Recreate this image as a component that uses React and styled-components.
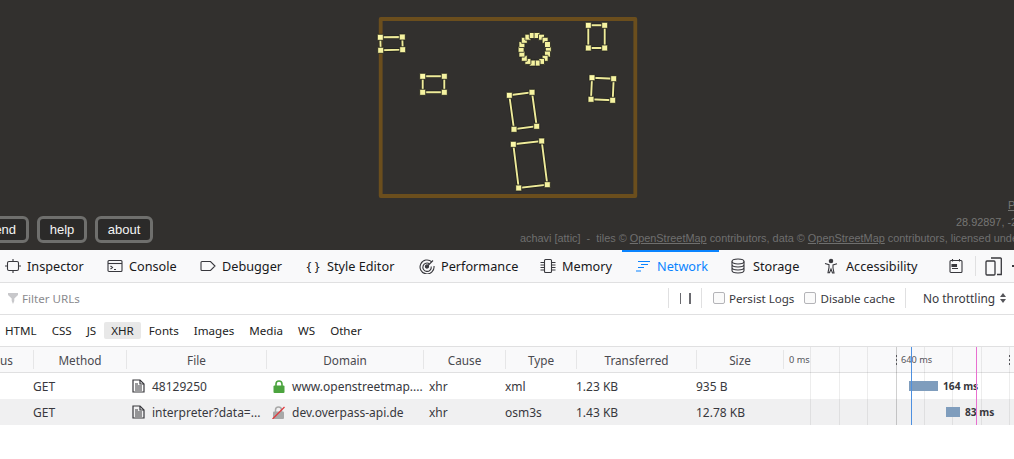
import React from 'react';
import styled, { createGlobalStyle } from 'styled-components';

const Global = createGlobalStyle`
  html, body { margin: 0; padding: 0; background: #fff; overflow: hidden; }
  body { font-family: "Noto Sans", "Open Sans", sans-serif; font-size: 12px; color: #38383d; }
`;

const Page = styled.div`
  width: 1014px;
  height: 459px;
  overflow: hidden;
  display: flex;
  flex-direction: column;
`;

/* map */
const Map = styled.div`
  position: relative;
  height: 250px;
  flex: none;
  background: #32302e;
  overflow: hidden;
  font-family: "Liberation Sans", Arial, sans-serif;
`;
const MapDrawing = styled.svg`
  position: absolute;
  left: 0;
  top: 0;
`;
const MapButtons = styled.div`
  position: absolute;
  left: -25px;
  top: 216px;
  display: flex;
  gap: 8px;
`;
const MapButton = styled.button`
  height: 27px;
  width: ${p => p.$w}px;
  padding: 0;
  box-sizing: border-box;
  border: 3px solid #6f6f6d;
  border-radius: 6px;
  background: #2b2a29;
  color: #f4f4f4;
  font: 13px "Liberation Sans", Arial, sans-serif;
`;
const MapInfo = styled.div`
  position: absolute;
  white-space: nowrap;
  font-size: 10.9px;
  line-height: 14px;
  color: ${p => p.$dim ? '#6f6f6e' : '#767674'};
  left: ${p => p.$x}px;
  top: ${p => p.$y}px;
  a { color: inherit; text-decoration: underline; }
`;

/* tabs */
const Tabs = styled.div`
  height: 32px;
  flex: none;
  background: #f9f9fa;
  border-bottom: 1px solid #e0e0e1;
  display: flex;
  align-items: stretch;
  position: relative;
`;
const TabList = styled.div`
  display: flex;
  flex: none;
  margin-left: -8px;
  width: 946px;
`;
const Tab = styled.div`
  display: flex;
  flex: none;
  width: ${p => p.$w}px;
  box-sizing: border-box;
  align-items: center;
  gap: 6px;
  padding: 0 0 1px ${p => p.$pl || 13}px;
  white-space: nowrap;
  font-size: 12.7px;
  color: ${p => p.$active ? '#0a84ff' : '#18181a'};
  box-shadow: ${p => p.$active ? 'inset 0 2px 0 #0a84ff' : 'none'};
  svg { flex: none; }
`;
const Braces = styled.span`
  width: 16px;
  flex: none;
  text-align: center;
`;
const TabActions = styled.div`
  display: flex;
  align-items: center;
  flex: none;
  padding-left: 11px;
`;
const VLine = styled.span`
  width: 1px;
  height: ${p => p.$h || 20}px;
  background: #e0e0e1;
  flex: none;
  margin: 0 ${p => p.$mr || 0}px 0 ${p => p.$ml || 0}px;
`;
const More = styled.span`
  position: absolute;
  left: 1012px;
  top: 15px;
  width: 3px;
  height: 2px;
  background: #38383d;
`;

/* filter bar */
const FilterBar = styled.div`
  height: 30px;
  padding: 0 0 1px 8px;
  flex: none;
  border-bottom: 1px solid #e0e0e1;
  display: flex;
  align-items: center;
  background: #fff;
  font-size: 11.6px;
`;
const Search = styled.div`
  display: flex;
  flex: none;
  align-items: center;
  gap: 4px;
  width: 660px;
  color: #8a8a8e;
`;
const Pause = styled.div`
  width: 32px;
  flex: none;
  display: flex;
  justify-content: center;
  gap: 8px;
  span { width: 1.5px; height: 11px; background: #6a6a6f; }
`;
const Check = styled.label`
  display: flex;
  flex: none;
  align-items: center;
  gap: 4px;
  white-space: nowrap;
  margin-left: ${p => p.$ml}px;
  i { width: 10px; height: 10px; border: 1px solid #b4b4b8; border-radius: 2px; background: #fafafa; }
`;
const Throttle = styled.div`
  margin-left: 17px;
  display: flex;
  flex: none;
  align-items: center;
  gap: 5px;
  white-space: nowrap;
  font-size: 11.9px;
`;

/* type filters */
const TypeBar = styled.div`
  height: 31px;
  flex: none;
  border-bottom: 1px solid #e0e0e1;
  display: flex;
  align-items: center;
  gap: 1px;
  margin-left: -2px;
  font-size: 11.6px;
`;
const TypeButton = styled.span`
  padding: 0 7px;
  height: 17px;
  line-height: 17px;
  border-radius: 2px;
  background: ${p => p.$on ? '#e8e8e8' : 'transparent'};
  color: #222;
`;

/* table */
const COLS = '33px 93px 140px 157px 82px 71px 120px 87px 231px';
const Table = styled.div`
  position: relative;
  flex: none;
`;
const Head = styled.div`
  display: grid;
  grid-template-columns: ${COLS};
  height: 25px;
  background: #f9f9fa;
  border-bottom: 1px solid #e0e0e1;
  align-items: center;
  font-size: 11.75px;
`;
const HeadCell = styled.div`
  text-align: ${p => p.$left ? 'left' : 'center'};
  color: #4a4a4f;
  white-space: nowrap;
  height: 19px;
  line-height: 21px;
  overflow: hidden;
  border-left: ${p => p.$left ? '0' : '1px solid #e6e6e7'};
`;
const Row = styled.div`
  display: grid;
  grid-template-columns: ${COLS};
  height: 26px;
  align-items: center;
  background: ${p => p.$alt ? '#f0f0f1' : '#fff'};
  color: #38383d;
  white-space: nowrap;
`;
const Cell = styled.div`
  display: flex;
  align-items: center;
  gap: ${p => p.$gap || 0}px;
  padding-left: ${p => p.$pl || 0}px;
  overflow: hidden;
  svg { flex: none; }
`;
const Grid = styled.div`
  position: absolute;
  left: 783px;
  right: 0;
  top: 0;
  bottom: 0;
  pointer-events: none;
  background-image: repeating-linear-gradient(to right, transparent 0 27.4px, rgba(0, 0, 0, .07) 27.4px 28.4px);
`;
const Marker = styled.div`
  position: absolute;
  top: 0;
  bottom: 0;
  left: ${p => p.$x}px;
  width: ${p => p.$w}px;
  background: ${p => p.$c};
`;
const TickMark = styled.div`
  position: absolute;
  left: ${p => p.$x}px;
  top: 8px;
  height: 10px;
  width: 1px;
  background-image: repeating-linear-gradient(to bottom, #55555a 0 2px, transparent 2px 4px);
`;
const Bar = styled.div`
  position: absolute;
  left: ${p => p.$x}px;
  top: ${p => p.$y}px;
  width: ${p => p.$w}px;
  height: 10px;
  background: #7f9dbd;
`;
const Took = styled.div`
  position: absolute;
  left: ${p => p.$x}px;
  top: ${p => p.$y}px;
  font-size: 10.2px;
  font-weight: 700;
  line-height: 14px;
  color: #38383d;
  white-space: nowrap;
`;
const Tick = styled.div`
  position: absolute;
  left: ${p => p.$x}px;
  top: 6px;
  font-size: 9.2px;
  line-height: 14px;
  color: #55555a;
  white-space: nowrap;
`;

/* drawings */
const shapes = [
  [[380.3, 37.3], [402.3, 37], [402.7, 49.7], [380.7, 50.3]],
  [[588.3, 25.3], [604.7, 25.3], [604.7, 48], [588.3, 48]],
  [[422.7, 76.3], [444.3, 76.3], [444.3, 92.3], [422.7, 92.3]],
  [[592, 77.7], [613.7, 78.7], [612.7, 100.3], [591, 99.3]],
  [[509.3, 95.3], [532, 92.3], [536.7, 126.3], [514, 129.3]],
  [[513.3, 144.3], [541.7, 141], [547.3, 184.7], [518.7, 188]],
];
const ring = Array.from({ length: 18 }, (_, i) => {
  const a = (i / 18) * Math.PI * 2;
  return [534.7 + 13.6 * Math.cos(a), 49.3 + 14 * Math.sin(a)];
});

const Node = ({ at, bright }) => (
  <rect x={at[0] - 3} y={at[1] - 3} width="6" height="6" rx="0.5"
    fill={bright ? '#fdfaa8' : '#f5f2a0'} stroke="#20201b" strokeWidth="0.8" />
);

const Shape = ({ pts }) => {
  const p = pts.map(q => q.join(',')).join(' ');
  return <g>
    <polygon points={p} fill="none" stroke="#23231e" strokeWidth="3.6" />
    <polygon points={p} fill="none" stroke="#efeb9a" strokeWidth="1.9" />
    {pts.map((q, i) => <Node key={i} at={q} bright={i === 0} />)}
  </g>;
};

const Ico = ({ children, c = '#38383d' }) => (
  <svg width="16" height="16" viewBox="0 0 16 16" fill="none" stroke={c} strokeWidth="1.1">{children}</svg>
);
const InspectorIcon = () => <Ico><rect x="2.5" y="3.5" width="11" height="9" rx="1.5" /><path d="M8 1v2.5M8 12.5V15M0 8h2.5M13.5 8H16" /></Ico>;
const ConsoleIcon = () => <Ico><rect x="1" y="2.5" width="14" height="11" rx="1" /><path d="M1 5.5h14" /><path d="M3.5 8l2 1.5-2 1.5M7 11.5h2" /></Ico>;
const DebuggerIcon = () => <Ico><path d="M1 4.5q0-1 1-1h8.500l4.500 4.500-4.500 4.500H2q-1 0-1-1z" /></Ico>;
const PerfIcon = () => <Ico><path d="M12.800 3.800A7 7 0 1 0 15 8" /><path d="M10.500 5.800A4.200 4.200 0 1 0 12.200 8.500" /><circle cx="8" cy="8.500" r="1.600" fill="#38383d" /><path d="M9 7.500l5-5" /></Ico>;
const MemoryIcon = () => <Ico><rect x="4.500" y="1.500" width="7" height="13" rx="1" /><path d="M0.500 4.500h4M0.500 7h4M0.500 9.500h4M0.500 12h4M11.500 4.500h4M11.500 7h4M11.500 9.500h4M11.500 12h4" /></Ico>;
const NetIcon = () => <Ico c="#0a84ff"><path d="M3 3.500h12M6 6.500h7M3 9.500h6M1 13h5" strokeWidth="1.200" /></Ico>;
const StorageIcon = () => <Ico><ellipse cx="7" cy="3.500" rx="6" ry="2.500" /><path d="M1 3.500v9c0 1.400 2.700 2.500 6 2.500s6-1.100 6-2.500v-9M1 6.500c0 1.400 2.700 2.500 6 2.500s6-1.100 6-2.500M1 9.500c0 1.400 2.700 2.500 6 2.500s6-1.100 6-2.500" /></Ico>;
const A11yIcon = () => <Ico><circle cx="7" cy="3" r="1.700" fill="#38383d" /><path d="M1 5.500l4 1.200v3l-1 5h1.500L7 11l1.500 4H10l-1-5v-3l4-1.200" /></Ico>;
const NotesIcon = () => <svg width="14" height="16" viewBox="0 0 14 16" fill="none" stroke="#38383d" strokeWidth="1.100"><rect x="1" y="2.500" width="12" height="12" rx="1" /><path d="M3.500 1v2.500M10.500 1v2.500" /><path d="M3 6.500h4.500v2H3zM3 10.500h6" fill="#38383d" /></svg>;
const RespIcon = () => <svg width="17" height="19" viewBox="0 0 17 19" fill="none" stroke="#38383d" strokeWidth="1.300"><rect x="1" y="4" width="9" height="14" rx="1" /><path d="M6 1h9.500a.8.8 0 0 1 .8.8V17.500H12" /></svg>;
const FunnelIcon = () => <svg width="10" height="11" viewBox="0 0 10 11"><path d="M0 0h10v2L6.300 5.500V8L5 11 3.700 8V5.500L0 2z" fill="#c8c8cb" /></svg>;
const ArrowsIcon = () => <svg width="6" height="10" viewBox="0 0 6 10"><path d="M3 0l3 4H0zM3 10L0 6h6z" fill="#55555a" /></svg>;
const DocIcon = () => <svg width="13" height="14" viewBox="0 0 13 14" fill="none" stroke="#38383d" strokeWidth="1.200"><path d="M1 1h7l4 4v8H1z" /><path d="M8 1v4h4" /><path d="M3 7h7M3 9h7M3 11h7M3 5h3" /></svg>;
const LockIcon = () => <svg width="12" height="13" viewBox="0 0 12 13"><path d="M3 6V4a3 3 0 0 1 6 0v2" fill="none" stroke="#4ca43f" strokeWidth="1.600" /><rect x="0.500" y="5.500" width="11" height="7.500" rx="1" fill="#4ca43f" /></svg>;
const InsecureIcon = () => <svg width="13" height="13" viewBox="0 0 13 13"><path d="M3.500 6V4a3 3 0 0 1 6 0v2" fill="none" stroke="#a8a8a8" strokeWidth="1.500" /><rect x="1" y="5.500" width="11" height="7.500" rx="1" fill="#a8a8a8" /><path d="M0.500 13L12.500 1" stroke="#e0393e" strokeWidth="1.300" /></svg>;

const types = ['HTML', 'CSS', 'JS', 'XHR', 'Fonts', 'Images', 'Media', 'WS', 'Other'];

export default function App() {
  return <Page>
    <Global />
    <Map>
      <MapDrawing width="1014" height="250">
        <rect x="380.7" y="19" width="254.600" height="177" fill="none" stroke="#6b4e1d" strokeWidth="3.800" strokeLinejoin="round" />
        {ring.map((q, i) => <Node key={i} at={q} />)}
        {shapes.map((s, i) => <Shape key={i} pts={s} />)}
      </MapDrawing>
      <MapButtons>
        <MapButton $w={54}>send</MapButton>
        <MapButton $w={50}>help</MapButton>
        <MapButton $w={58}>about</MapButton>
      </MapButtons>
      <MapInfo $x={1008} $y={198}><a href="#p">P</a></MapInfo>
      <MapInfo $x={956} $y={215}>28.92897, -2</MapInfo>
      <MapInfo $dim $x={520} $y={231}>achavi [attic] &nbsp;-&nbsp; tiles © <a href="#o">OpenStreetMap</a> contributors, data © <a href="#o">OpenStreetMap</a> contributors, licensed under</MapInfo>
    </Map>

    <Tabs>
      <TabList>
        <Tab $w={102}><InspectorIcon />Inspector</Tab>
        <Tab $w={93}><ConsoleIcon />Console</Tab>
        <Tab $w={105}><DebuggerIcon />Debugger</Tab>
        <Tab $w={114}><Braces>{'{ }'}</Braces>Style Editor</Tab>
        <Tab $w={121}><PerfIcon />Performance</Tab>
        <Tab $w={95}><MemoryIcon />Memory</Tab>
        <Tab $w={97} $active><NetIcon />Network</Tab>
        <Tab $w={92} $pl={12}><StorageIcon />Storage</Tab>
        <Tab $w={126}><A11yIcon />Accessibility</Tab>
      </TabList>
      <TabActions>
        <NotesIcon />
        <VLine $ml={12} $mr={9} />
        <RespIcon />
      </TabActions>
      <More />
    </Tabs>

    <FilterBar>
      <Search><FunnelIcon />Filter URLs</Search>
      <VLine />
      <Pause><span /><span /></Pause>
      <VLine />
      <Check $ml={11}><i />Persist Logs</Check>
      <Check $ml={10}><i />Disable cache</Check>
      <VLine $ml={10} />
      <Throttle>No throttling <ArrowsIcon /></Throttle>
    </FilterBar>

    <TypeBar>
      {types.map(t => <TypeButton key={t} $on={t === 'XHR'}>{t}</TypeButton>)}
    </TypeBar>

    <Table>
      <Head>
        <HeadCell $left>us</HeadCell>
        <HeadCell>Method</HeadCell>
        <HeadCell>File</HeadCell>
        <HeadCell>Domain</HeadCell>
        <HeadCell>Cause</HeadCell>
        <HeadCell>Type</HeadCell>
        <HeadCell>Transferred</HeadCell>
        <HeadCell>Size</HeadCell>
        <HeadCell />
      </Head>
      <Row>
        <Cell />
        <Cell>GET</Cell>
        <Cell $pl={6} $gap={7}><DocIcon />48129250</Cell>
        <Cell $pl={7} $gap={7}><LockIcon />www.openstreetmap....</Cell>
        <Cell $pl={6}>xhr</Cell>
        <Cell>xml</Cell>
        <Cell>1.23 KB</Cell>
        <Cell>935 B</Cell>
        <Cell />
      </Row>
      <Row $alt>
        <Cell />
        <Cell>GET</Cell>
        <Cell $pl={6} $gap={7}><DocIcon />interpreter?data=...</Cell>
        <Cell $pl={6} $gap={7}><InsecureIcon />dev.overpass-api.de</Cell>
        <Cell $pl={6}>xhr</Cell>
        <Cell>osm3s</Cell>
        <Cell>1.43 KB</Cell>
        <Cell>12.78 KB</Cell>
        <Cell />
      </Row>
      <Grid />
      <Marker $x={896} $w={1} $c="rgba(0,0,0,.12)" />
      <TickMark $x={896} />
      <TickMark $x={1009} />
      <Tick $x={789}>0 ms</Tick>
      <Tick $x={901}>640 ms</Tick>
      <Bar $x={909} $y={34} $w={29} />
      <Bar $x={946} $y={60} $w={14} />
      <Took $x={943} $y={32}>164 ms</Took>
      <Took $x={965} $y={58}>83 ms</Took>
      <Marker $x={911} $w={1} $c="#4d90e0" />
      <Marker $x={975.5} $w={1.5} $c="#e86fd0" />
    </Table>
  </Page>;
}
